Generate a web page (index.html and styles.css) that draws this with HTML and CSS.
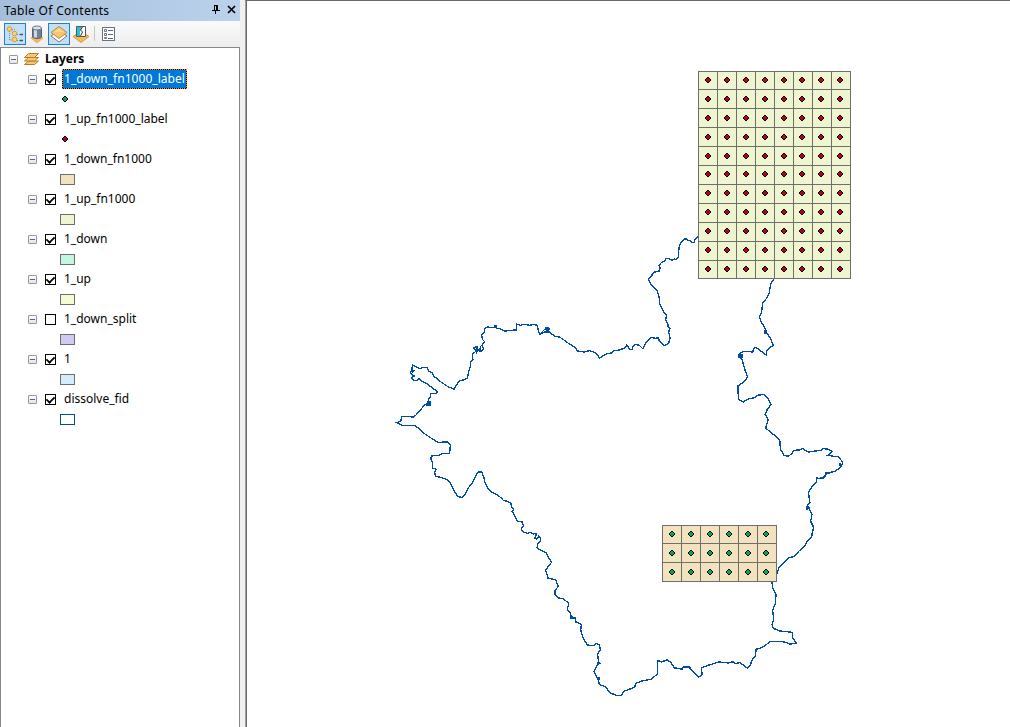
FILE: index.html
```
<!DOCTYPE html>
<html lang="en">
<head>
<meta charset="utf-8">
<title>Table Of Contents</title>
<link rel="stylesheet" href="styles.css">
</head>
<body>
<div class="app">
  <aside class="toc">
    <header class="titlebar">
      <span class="title">Table Of Contents</span>
      <svg class="pin" width="8" height="10" viewBox="0 0 8 10"><path d="M2.500 5V.500h3V5M5.500 0v5M4.500 0v5M0 5.500h8M3.500 6v3" /></svg>
      <svg class="close" width="9" height="9" viewBox="0 0 9 9"><path d="M1 1l7 7M8 1L1 8" /></svg>
    </header>
    <div class="toolbar">
      <button class="tool active" aria-label="List By Drawing Order">
        <svg width="20" height="20" viewBox="0 0 20 20">
          <path d="M4.500 7v9h3M7 5.500h2.500v4h3M12 10.500h3M12 16.500h3" fill="none" stroke="#888" stroke-dasharray="1 1"/>
          <circle cx="4.500" cy="5" r="2.300" fill="#f8d477" stroke="#d49b3a"/><circle cx="9.500" cy="9.500" r="2.300" fill="#f8d477" stroke="#d49b3a"/><circle cx="9.500" cy="15.500" r="2.300" fill="#f8d477" stroke="#d49b3a"/>
          <path d="M15 10.500h3M15 16.500h3" stroke="#315b87" stroke-width="1.500"/>
        </svg>
      </button>
      <button class="tool" aria-label="List By Source">
        <svg width="20" height="20" viewBox="0 0 20 20">
          <path d="M4 14l6-4 6 4-6 5z" fill="#f2bd55" stroke="#d09b44" stroke-width=".6"/>
          <path d="M5.500 4v9c1 2 8 2 9 0V4" fill="#718198" stroke="#53617a"/><path d="M7 5v8.500h3V5z" fill="#ced7e3"/><ellipse cx="10" cy="4" rx="4.500" ry="2" fill="#dce4ee" stroke="#66758c"/>
        </svg>
      </button>
      <button class="tool active" aria-label="List By Visibility">
        <svg width="20" height="20" viewBox="0 0 20 20">
          <path d="M2 12l8-5 8 5-8 6z" fill="#fff" stroke="#777"/><path d="M2 8.500l8-6 8 6-8 6z" fill="#f5c671" stroke="#bd8533"/><path d="M5 8l5-4 5 4" fill="#ffdb94"/>
        </svg>
      </button>
      <button class="tool" aria-label="List By Selection">
        <svg width="20" height="20" viewBox="0 0 20 20">
          <path d="M2 12.500l8-5 8 5-8 6z" fill="#f2bd55" stroke="#d09b44"/><path d="M5.500 2.500h9v10h-9z" fill="#fff" stroke="#555"/><path d="M6 3h5l-2 4v5H6z" fill="#20c4dc"/><path d="M11.500 3l-2 3 2 2-2 4" fill="none" stroke="#333"/>
        </svg>
      </button>
      <span class="divider"></span>
      <button class="tool options" aria-label="Options">
        <svg width="14" height="14" viewBox="0 0 14 14"><rect x=".5" y=".5" width="12" height="13" fill="#fff" stroke="#63738a"/><path d="M6 3.500h5M6 7.500h5M6 11.500h5" stroke="#58687e"/><path d="M2.500 2.500h2v2h-2zM2.500 6.500h2v2h-2zM2.500 10.500h2v1h-2z" fill="#fff" stroke="#555" stroke-width=".8"/></svg>
      </button>
    </div>
    <div class="tree">
      <div class="row root"><i class="toggle"></i>
        <svg class="stack" width="17" height="14" viewBox="0 0 17 14"><g fill="#f3c77c" stroke="#b77b24"><path d="M1.500 12.500l4-3.500h10l-4 3.500z"/><path d="M1.500 9l4-3.500h10L11.500 9z"/><path d="M1.500 5.500l4-4h10l-4 4z"/></g></svg>
        <span class="name">Layers</span></div>
      <div class="row"><i class="toggle"></i><i class="check on"></i><span class="name selected">1_down_fn1000_label</span></div>
      <div class="legend point"><svg class="dot" width="6" height="6" viewBox="-3 -3 6 6"><use href="#green"/></svg></div>
      <div class="row"><i class="toggle"></i><i class="check on"></i><span class="name">1_up_fn1000_label</span></div>
      <div class="legend point"><svg class="dot" width="6" height="6" viewBox="-3 -3 6 6"><use href="#red"/></svg></div>
      <div class="row"><i class="toggle"></i><i class="check on"></i><span class="name">1_down_fn1000</span></div>
      <div class="legend"><i class="swatch tan"></i></div>
      <div class="row"><i class="toggle"></i><i class="check on"></i><span class="name">1_up_fn1000</span></div>
      <div class="legend"><i class="swatch lime"></i></div>
      <div class="row"><i class="toggle"></i><i class="check on"></i><span class="name">1_down</span></div>
      <div class="legend"><i class="swatch mint"></i></div>
      <div class="row"><i class="toggle"></i><i class="check on"></i><span class="name">1_up</span></div>
      <div class="legend"><i class="swatch yellow"></i></div>
      <div class="row"><i class="toggle"></i><i class="check"></i><span class="name">1_down_split</span></div>
      <div class="legend"><i class="swatch violet"></i></div>
      <div class="row"><i class="toggle"></i><i class="check on"></i><span class="name">1</span></div>
      <div class="legend"><i class="swatch sky"></i></div>
      <div class="row"><i class="toggle"></i><i class="check on"></i><span class="name">dissolve_fid</span></div>
      <div class="legend"><i class="swatch outline"></i></div>
    </div>
  </aside>
  <main class="map">
    <svg width="763" height="726" viewBox="247 1 763 726" shape-rendering="crispEdges">
      <defs>
        <path id="diamond" d="M-1-3h2v1h1v1h1v2h-1v1h-1v1h-2v-1h-1v-1h-1v-2h1v-1h1z"/>
        <g id="red"><use href="#diamond"/><path d="M-1-2h2v1h1v2h-1v1h-2v-1h-1v-2h1z" fill="#b40020"/></g>
        <g id="green"><use href="#diamond"/><path d="M-1-2h2v1h1v2h-1v1h-2v-1h-1v-2h1z" fill="#00a65a"/></g>
      </defs>
      <g class="coast">
        <path transform="translate(540 230) scale(.333333)" d="M475 19L466 26 463 36 457 38 450 32 443 31 438 26 430 29 423 38 418 48 416 65 415 82 408 88 402 87 396 91 390 87 379 85 373 94 364 98 357 106 361 113 358 123 344 126 338 130 335 138 326 148 330 158 338 170 350 180 354 190 358 205 359 222 368 238 373 250 380 256 377 270 384 282 384 291 390 295 386 306 390 324 386 340 374 347 363 338 358 333 355 323 347 325 334 322 328 329 318 338 312 349 308 356 297 345 285 344 278 352 276 358 270 358 260 346 254 354 238 360 222 362 214 369 195 373 184 382 178 385 173 374 160 365 148 362 134 366 112 363 106 352 88 342 68 327 58 321 45 319 28 306 20 296 12 300 0 312"/>
        <path transform="translate(390 310) scale(.333333)" d="M480 56L468 64 460 68 450 72 445 62 442 46 430 43 420 46 404 43 390 46 380 42 380 60 360 61 344 64 328 56 315 53 292 51 285 56 282 69 275 75 277 88 284 95 276 106 281 118 274 124 264 122 257 111 252 116 258 124 249 130 247 137 249 149 241 156 241 170 236 184 232 204 222 210 210 211 200 224 193 238 174 230 153 216 132 199 126 188 116 183 112 173 100 172 89 176 77 170 67 164 66 180 62 188 65 194 73 198 64 204 70 211 80 212 88 206 96 214 112 222 130 236 143 246 136 251 122 251 122 261 115 266 118 279 102 285 92 300 78 315 70 321 54 320 35 320 32 334 20 338 36 346 72 346 86 354 102 370 126 386 143 397 173 396 181 405 179 430 160 430 145 436 124 438 122 448 128 458 128 474 138 478 134 487 136 498 150 502 170 508 183 522 192 542 204 560 217 562 226 552 234 535 248 517 257 498 265 486 275 486 281 500 284 515 294 536 303 546 321 554 340 569"/>
        <path transform="translate(420 440) scale(.333333)" d="M250 180L272 188 274 198 281 209 276 213 287 234 293 244 306 246 310 257 304 267 310 277 324 280 332 277 339 282 348 280 349 286 343 294 350 298 356 289 361 292 361 303 353 312 351 323 359 329 378 338 386 354 395 367 386 377 377 391 384 414 407 420 415 439 405 452 405 465 416 474 431 477 446 490 442 510 451 518 452 533 466 537"/>
        <path transform="translate(540 570) scale(.333333)" d="M90 144L105 143 108 156 124 163 122 180 130 206 142 225 160 227 169 221 178 224 181 239 173 253 176 279 162 304 174 327 178 344 197 350 209 368 229 376 244 376 251 364 284 352 287 340 306 333 335 327 352 312 353 272 364 276 380 270 392 276 403 293 427 297 431 290 448 291 464 310 477 322"/>
        <path transform="translate(650 460) scale(.333333)" d="M22 601L35 606 52 599 64 609 73 624 94 627 101 621 114 620 128 634 145 652 156 645 155 624 171 617 207 606 236 609 250 605 256 611 269 608 283 617 292 625 300 618 306 600 317 587 318 568 337 562 361 545 394 545 409 547 419 553 439 549 428 533 427 517 390 513 370 505 366 493 371 480 368 451 376 430 378 405 368 382 366 366M381 341L387 322 405 305 416 293 433 290 447 273 465 257 471 245 485 231 487 217 491 202 482 184 486 163 477 144 470 148 472 137 480 128 477 111 476 96 485 81 500 67 499 54 508 55 521 52 526 44 540 38"/>
        <path transform="translate(720 270) scale(.333333)" d="M161 27L152 42 148 68 139 86 128 98 125 125 118 141 125 158 137 178 140 190 150 202 160 226 150 233 141 240 138 255 119 240 108 232 101 236 98 246 73 244 58 250 56 263 65 264 70 282 76 304 83 320 74 334 54 348 55 388 70 396 82 388 103 383 115 375 132 374 141 381 153 404 141 420 135 433 145 449 137 474 152 487 165 497 180 513 181 540 188 545 190 555 205 559 215 551 221 541 237 540 248 536 257 542 265 546 302 541 310 536 326 538 337 545 323 556 357 561 369 579 360 593 347 603 320 610 312 624 287 627"/>
        <path d="M473 347l3 3 1-4v6l3-4v3M545 328h3v4h-3M547 329v2M427 402h3v3h-4M570 617h3l-2-2M597 663h3l-2-2M597 678h2v2M765 330v3h2M740 354v3h2v-3M825 473h3M840 463v3M807 507h2M411 371h3l-3 3 3 2-2 2M494 326h3"/>
      </g>
      <rect class="upper" x="698.500" y="71.500" width="152" height="207"/>
      <path class="grid" d="M717.500 71v207M736.500 71v207M755.500 71v207M774.500 71v207M793.500 71v207M812.500 71v207M831.500 71v207M698 89.500h152M698 108.500h152M698 127.500h152M698 146.500h152M698 165.500h152M698 184.500h152M698 203.500h152M698 222.500h152M698 241.500h152M698 260.500h152"/>
      <rect class="lower" x="662.500" y="525.500" width="114" height="56"/>
      <path class="grid" d="M681.500 525v56M700.500 525v56M719.500 525v56M738.500 525v56M757.500 525v56M662 543.500h114M662 562.500h114"/>
      <g id="points"></g>
    </svg>
  </main>
</div>
<script src="map.js"></script>
</body>
</html>
```
FILE: styles.css
```
* { box-sizing: border-box; }
body { margin: 0; overflow: hidden; background: #f0f0f0; font: 12px/20px "Noto Sans", "Open Sans", sans-serif; color: #000; }
.app { display: grid; grid-template-columns: 240px 1fr; column-gap: 5px; height: 727px; }
.toc { display: flex; flex-direction: column; min-width: 0; }
.titlebar { display: flex; align-items: center; height: 21px; padding: 0 4px; background: linear-gradient(90deg, #a4bedc, #bbd2ec); }
.title { flex: 1; letter-spacing: .3px; }
.pin, .close { fill: none; stroke: #000; }
.pin { margin: -2px 7px 0 0; shape-rendering: crispEdges; }
.close { stroke-width: 1.7; margin-top: -2px; }
.toolbar { display: flex; align-items: center; height: 26px; padding: 0 4px 1px; background: linear-gradient(#fafafa, #ededed); }
.tool { width: 22px; height: 22px; padding: 0; border: 1px solid transparent; background: none; display: grid; place-items: center; }
.tool.active { border-color: #1683de; background: #c4def5; }
.divider { width: 1px; height: 15px; margin: 0 3px 0 2px; background: #c5c5c5; }
.tree { flex: 1; padding-top: 1px; background: #fff; border: 1px solid #828790; border-bottom: 0; }
.row { display: flex; align-items: center; height: 20px; padding-left: 27px; }
.root { padding-left: 8px; font-weight: 700; }
.toggle { width: 9px; height: 9px; border: 1px solid #999; border-radius: 1px; background: linear-gradient(#4b63a7, #4b63a7) center / 5px 1px no-repeat, linear-gradient(#fff, #e4e4e4); }
.check { width: 11px; height: 11px; margin: 1px 6px 0 8px; border: 1px solid #000; background: #fff; display: grid; place-items: center; }
.on::after { content: ""; width: 7px; height: 4px; margin-top: -2px; border: solid #000; border-width: 0 0 2px 2px; transform: rotate(-45deg) scale(.9); }
.stack { margin: 0 4px 0 5px; }
.name { height: 20px; line-height: 18px; padding: 0 1px; border: 1px solid transparent; white-space: nowrap; }
.root .name { padding-left: 0; }
.selected {
  color: #fff;
  border: 1px dotted #ff8728;
  background: linear-gradient(#0078d7, #0078d7) padding-box, linear-gradient(#000, #000) border-box;
  letter-spacing: .04px;
}
.legend { display: flex; align-items: center; height: 20px; padding: 1px 0 0 59px; }
.point { padding-top: 0; padding-bottom: 1px; }
.dot { margin-left: 2px; shape-rendering: crispEdges; }
.swatch { width: 15px; height: 11px; border: 1px solid #6e6e6e; }
.tan { background: #f2e2be; }
.lime { background: #eff6cf; }
.mint { background: #c2f8e2; }
.yellow { background: #f4fcd2; }
.violet { background: #d3caf1; }
.sky { background: #d4ecfc; }
.outline { border-color: #004da8; background: #fff; }
.map { border-top: 1px solid #696969; border-left: 1px solid #a0a0a0; background: #fff; box-shadow: inset 1px 0 #696969; padding-left: 1px; overflow: hidden; }
.map svg { display: block; }
.coast { fill: none; stroke: #004da8; }
.coast path { vector-effect: non-scaling-stroke; stroke-width: 1.35px; }
.upper { fill: #eff6cf; stroke: #6e6e6e; }
.lower { fill: #f2e2be; stroke: #6e6e6e; }
.grid { fill: none; stroke: #6e6e6e; }
```
FILE: map.js
```
const points = document.getElementById("points");

function plot(symbol, columns, rows) {
  for (const y of rows) {
    for (const x of columns) {
      const mark = document.createElementNS("http://www.w3.org/2000/svg", "use");
      mark.setAttribute("href", symbol);
      mark.setAttribute("x", x);
      mark.setAttribute("y", y);
      points.append(mark);
    }
  }
}

plot("#red", [708, 727, 746, 765, 784, 802, 821, 840], [80, 99, 118, 137, 156, 174, 193, 212, 231, 250, 269]);
plot("#green", [672, 691, 710, 729, 748, 766], [534, 553, 572]);
```
